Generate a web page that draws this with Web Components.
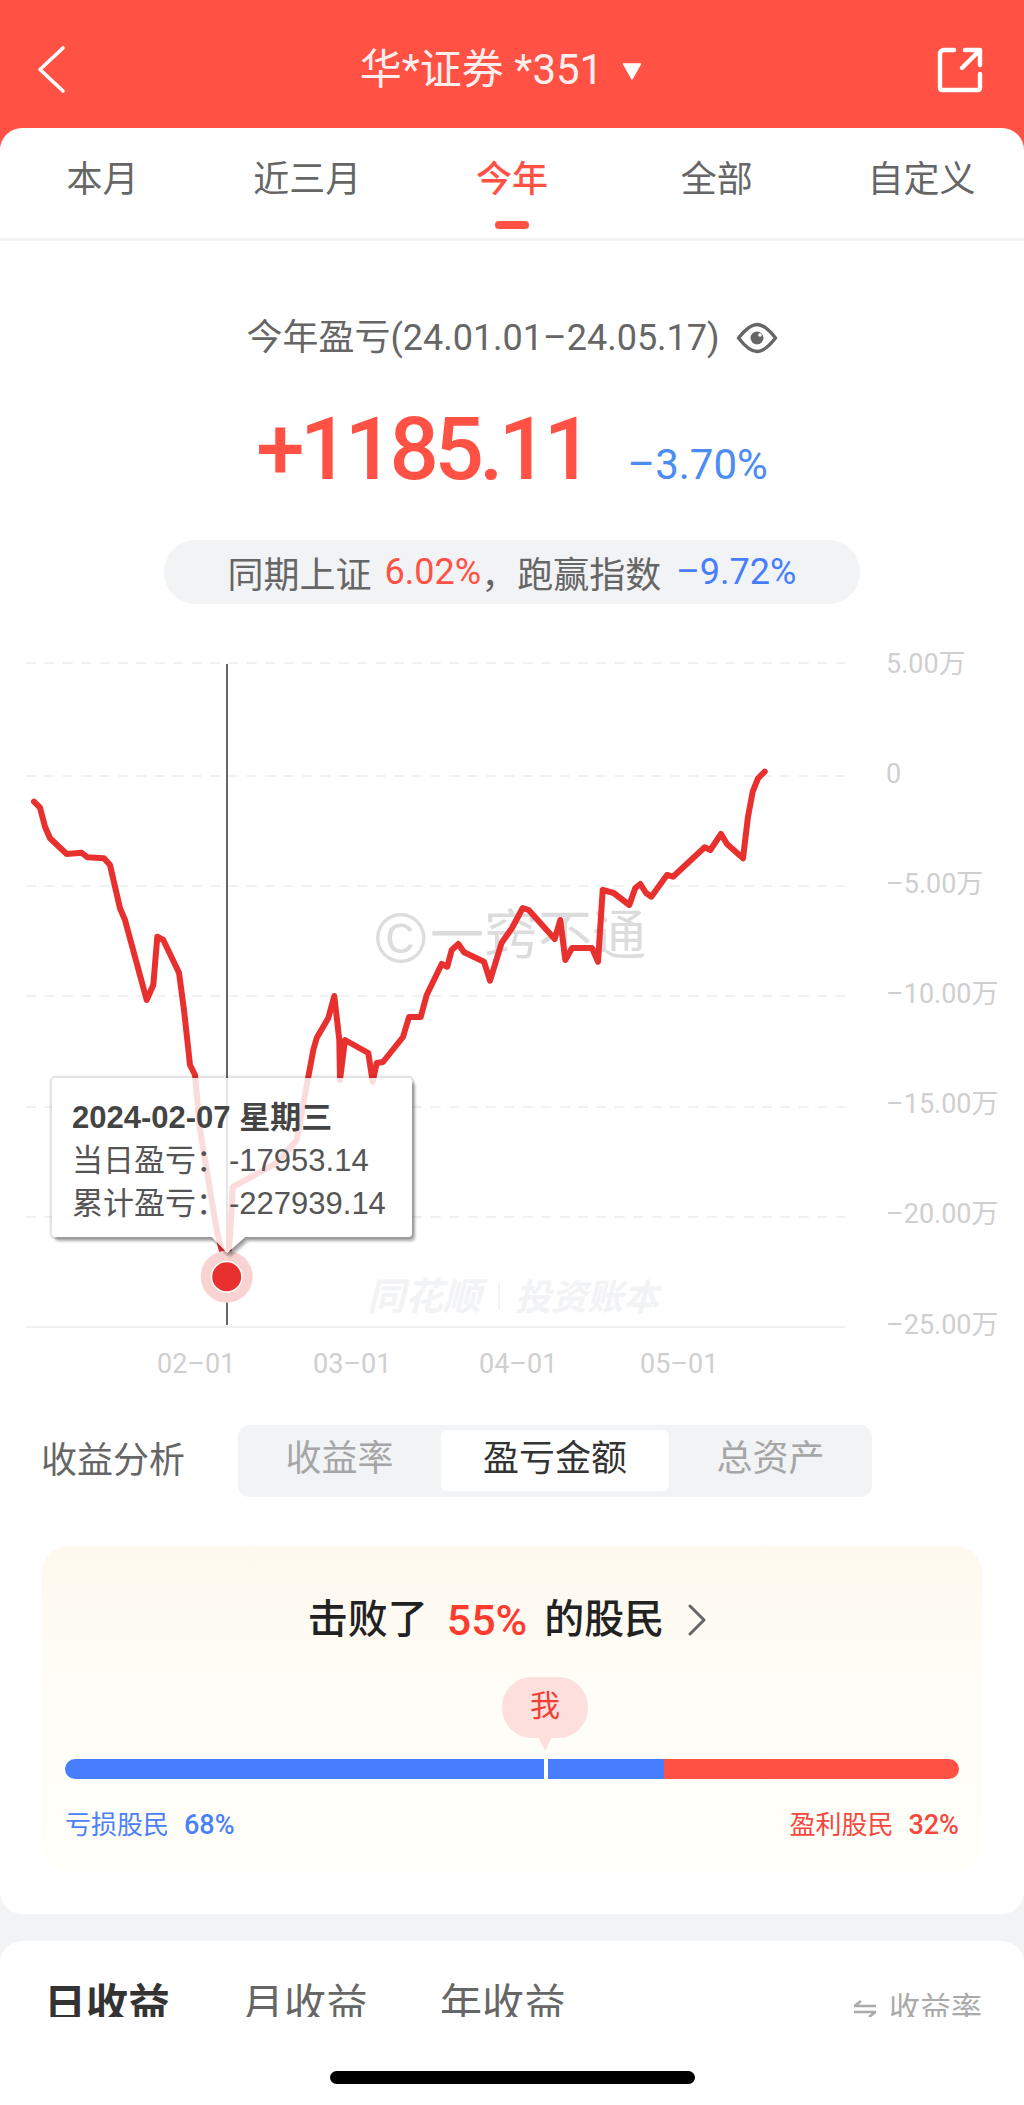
<!DOCTYPE html>
<html lang="zh-CN">
<head>
<meta charset="utf-8">
<title>今年盈亏</title>
<style>
html,body{margin:0;padding:0;background:#f2f3f5}
body{width:1024px;height:2105px;overflow:hidden;font-family:Roboto,"Noto Sans CJK SC",sans-serif;color:#666}
</style>
</head>
<body>
<phone-page>
  <nav-bar title-text="华*证券 *351"></nav-bar>
  <main-sheet>
    <range-tabs></range-tabs>
    <profit-summary></profit-summary>
    <profit-chart></profit-chart>
    <metric-switch></metric-switch>
    <beat-card></beat-card>
  </main-sheet>
  <earnings-sheet></earnings-sheet>
</phone-page>
<script>
function def(name, html, setup){
  customElements.define(name, class extends HTMLElement{
    constructor(){super();const t=document.createElement('template');t.innerHTML=html;this.attachShadow({mode:'open'}).appendChild(t.content.cloneNode(true));}
    connectedCallback(){if(setup)setup(this);}
  });
}

def('phone-page',`<style>
:host{display:block;width:1024px;height:2105px;overflow:hidden;background:#f2f3f5}
</style><slot></slot>`);

def('nav-bar',`<style>
:host{display:flex;align-items:flex-start;justify-content:space-between;box-sizing:border-box;height:160px;margin-bottom:-32px;padding:40px 34px 0 34px;background:#ff5245;color:#fff}
svg{display:block;flex:none}
.title{display:flex;align-items:center;height:60px;margin-top:0;font:400 42px/60px Roboto,"Noto Sans CJK SC",sans-serif;color:rgba(255,255,255,.92);white-space:pre}
.title svg{margin-left:19px;margin-top:2px}
</style>
<svg width="34" height="60" viewBox="34 40 34 60" fill="none" stroke="#fff" stroke-width="3.6" stroke-linecap="round" stroke-linejoin="round"><path d="M63 48 40 69.5 63 91"/></svg>
<div class="title"><span id="t"></span><svg width="20" height="17" viewBox="0 0 20 17"><path d="M1.5 1h17L10 16z" fill="#fff" stroke="#fff" stroke-width="1.5" stroke-linejoin="round"/></svg></div>
<svg width="56" height="60" viewBox="934 40 56 60" fill="none" stroke="#fff" stroke-width="4.4" stroke-linecap="round" stroke-linejoin="round"><path d="M954 50h-10a4 4 0 0 0-4 4v34a2 2 0 0 0 2 2h36a2 2 0 0 0 2-2V74"/><path d="M962 68 979 51M965 50h15v15"/></svg>`,
el=>{el.shadowRoot.getElementById('t').textContent=el.getAttribute('title-text');});

def('main-sheet',`<style>
:host{display:block;box-sizing:border-box;height:1786px;background:#fff;border-radius:22px}
</style><slot></slot>`);

def('range-tabs',`<style>
:host{display:grid;grid-template-columns:repeat(5,1fr);box-sizing:border-box;height:113px;border-bottom:3px solid #f2f3f5;padding:0 0;font:400 36px/104px Roboto,"Noto Sans CJK SC",sans-serif;color:#666;text-align:center}
div{position:relative}
.on{color:#ff5245;font-weight:500}
.on::after{content:"";position:absolute;left:50%;top:93px;width:34px;height:8px;margin-left:-17px;border-radius:4px;background:#ff5245}
</style>
<div>本月</div><div>近三月</div><div class="on">今年</div><div>全部</div><div>自定义</div>`);

def('profit-summary',`<style>
:host{display:flex;flex-direction:column;align-items:center;padding-top:73px;font-family:Roboto,"Noto Sans CJK SC",sans-serif}
.head{display:flex;align-items:center;height:48px;font-size:36px;line-height:48px;color:#666;white-space:nowrap}
.head svg{margin-left:16px}
.nums{display:flex;align-items:baseline;height:100px;margin-top:37px;line-height:100px;white-space:nowrap}
.big{font-size:87px;font-weight:500;color:#ff5245;letter-spacing:-4.6px}
.pct{margin-left:39px;font-size:42px;color:#4b8cf5}
.pill{display:flex;align-items:center;justify-content:center;box-sizing:border-box;width:696px;height:64px;margin-top:41px;border-radius:32px;background:#f2f3f5;font-size:36px;color:#666;white-space:pre}
.r{color:#ff5245;margin-left:13px}.b{color:#477eff;margin-left:15px}
</style>
<div class="head"><span>今年盈亏(24.01.01–24.05.17)</span>
<svg width="42" height="34" viewBox="735 321 42 34" fill="none"><path d="M737.5 338Q748 324.500 756 324.500T774.500 338Q764 351.500 756 351.500T737.500 338Z" stroke="#666" stroke-width="3.4" stroke-linejoin="round"/><circle cx="756" cy="338" r="6.500" fill="#666"/><circle cx="759" cy="335" r="1.800" fill="#fff"/></svg></div>
<div class="nums"><span class="big">+1185.11</span><span class="pct">–3.70%</span></div>
<div class="pill"><span>同期上证</span><span class="r">6.02%</span><span>，</span><span>跑赢指数</span><span class="b">–9.72%</span></div>`);

const linePts="34,801.7 40,807.7 45,826.7 50,838.3 66.7,854 81.7,852.7 87.3,857.3 104,858.3 110,865 120,908.3 125,920 146.700,1000 153.300,985 157.300,936.700 163.300,940 179,972.700 184,1010 187.300,1040 190,1065 195,1075 200,1130 216.700,1230 226.700,1270 230,1237 232.700,1187 276.700,1163 296.700,1140 308.300,1077 313.300,1050 316.700,1038 328.300,1018 334.300,996 339.300,1040 340,1080 345,1040 368.300,1053 372.700,1081.700 376.700,1063 383,1062 403,1037 409,1017 420.700,1017 426.700,995 441.700,964 447.300,966.700 451.700,950 458.300,944 464,952.300 484,961.700 490,980.700 501.700,942.700 512,928 522.700,908 528.700,910 554.700,939 560.300,920 565.300,960 572,948 592,948 598,961.700 602.700,890 613.700,893 629.300,905 635.300,888 640.300,884 646,893 651.300,896.700 667,875 673,876.700 704.700,847.300 710.300,850 721,834 727,844 743,858.300 748,816.700 752.700,791.700 758,778.300 764.700,771.700";
const gridYs=[663,776,886,996,1107,1217];
const yLabels=[["5.00万",673],["0",783],["–5.00万",893],["–10.00万",1003],["–15.00万",1113],["–20.00万",1223],["–25.00万",1334]];
const xLabels=[["02–01",157],["03–01",313],["04–01",479],["05–01",640]];

def('profit-chart',`<style>
:host{display:block;position:relative;height:821px;overflow:visible}
svg{display:block;width:1024px;height:821px}
text{font-family:Roboto,"Noto Sans CJK SC",sans-serif}
.ax{font-size:27px;fill:#cfcfcf}
.wm{font-size:54px;fill:#dcdcdc}
.wb{font-weight:700;font-style:italic;fill:#f2f3f5}
chart-tooltip{left:52px;top:474px}
</style>
<svg viewBox="0 604 1024 821" xmlns="http://www.w3.org/2000/svg">
  <g id="grid"></g>
  <line x1="26" x2="845" y1="1327" y2="1327" stroke="#f0f1f2" stroke-width="2"/>
  <text x="375" y="962" style="font-family:'Liberation Sans',sans-serif;font-size:70px;fill:#dcdcdc">©</text>
  <text class="wm" x="430" y="955">一窍不通</text>
  <text class="wb" x="367" y="1310" font-size="38" style="font-size:38px">同花顺</text>
  <line x1="499" x2="499" y1="1283" y2="1310" stroke="#f2f3f5" stroke-width="2"/>
  <text class="wb" x="515" y="1310" style="font-size:36px">投资账本</text>
  <g id="labels"></g>
  <line x1="227" x2="227" y1="664" y2="1325" stroke="#666" stroke-width="2"/>
  <polyline points="${linePts}" fill="none" stroke="#e8302f" stroke-width="6" stroke-linejoin="round" stroke-linecap="round"/>
  <circle cx="226.700" cy="1276.700" r="26" fill="#f9d2d2"/>
  <circle cx="226.700" cy="1276.700" r="16" fill="#fff"/>
  <circle cx="226.700" cy="1276.700" r="14.500" fill="#e8302f"/>
</svg>
<chart-tooltip></chart-tooltip>`,
el=>{
  const NS='http://www.w3.org/2000/svg',r=el.shadowRoot,g=r.getElementById('grid'),l=r.getElementById('labels');
  gridYs.forEach(y=>{const e=document.createElementNS(NS,'line');e.setAttribute('x1',26);e.setAttribute('x2',845);e.setAttribute('y1',y);e.setAttribute('y2',y);e.setAttribute('stroke','#f0f1f2');e.setAttribute('stroke-width',2);e.setAttribute('stroke-dasharray','10 8.4');g.appendChild(e);});
  const tx=(s,x,y)=>{const e=document.createElementNS(NS,'text');e.setAttribute('class','ax');e.setAttribute('x',x);e.setAttribute('y',y);e.textContent=s;l.appendChild(e);};
  yLabels.forEach(([s,y])=>tx(s,886,y));
  xLabels.forEach(([s,x])=>tx(s,x,1373));
});

const tipShape="M4 0H356a4 4 0 0 1 4 4V155a4 4 0 0 1-4 4H193L175 175 160 159H4a4 4 0 0 1-4-4V4a4 4 0 0 1 4-4Z";
def('chart-tooltip',`<style>
:host{display:block;position:absolute;box-sizing:border-box;width:360px;height:159px;padding:20px 0 0 20px;font:400 31px/40px "Liberation Sans","Noto Sans CJK SC",sans-serif;color:#555;white-space:nowrap}
svg{position:absolute;left:0;top:0;overflow:visible}
div{position:relative}
.d{font-weight:700;color:#444}
.c{font-family:"Noto Sans CJK TC",sans-serif}
.v{margin-left:2px}
</style>
<svg width="360" height="176" viewBox="0 0 360 176">
  <defs>
    <filter id="bl" x="-10%" y="-10%" width="120%" height="120%"><feGaussianBlur stdDeviation="1.500"/></filter>
    <mask id="out" maskUnits="userSpaceOnUse" x="-20" y="-20" width="400" height="220"><rect x="-20" y="-20" width="400" height="220" fill="#fff"/><path d="${tipShape}" fill="#000"/></mask>
  </defs>
  <g mask="url(#out)">
    <path d="${tipShape}" fill="none" stroke="#000" stroke-opacity=".1" stroke-width="5"/>
    <path d="${tipShape}" transform="translate(3 4)" fill="#000" fill-opacity=".32" filter="url(#bl)"/>
  </g>
  <path d="${tipShape}" fill="#fff" fill-opacity=".83"/>
</svg>
<div class="d">2024-02-07 星期三</div>
<div>当日盈亏<span class="c">：</span><span class="v">-17953.14</span></div>
<div>累计盈亏<span class="c">：</span><span class="v">-227939.14</span></div>`);

def('metric-switch',`<style>
:host{display:flex;align-items:center;height:72px;padding-left:41px;font:400 36px/48px Roboto,"Noto Sans CJK SC",sans-serif;color:#666}
.l{flex:0 0 197px}
.seg{display:grid;grid-template-columns:203px 228px 203px;box-sizing:border-box;width:634px;height:72px;padding:5px 0 6px;border-radius:12px;background:#f2f3f5;color:#a6a6a6;text-align:center;line-height:58px}
.on{background:#fff;border-radius:6px;color:#333}
</style>
<div class="l">收益分析</div>
<div class="seg"><div>收益率</div><div class="on">盈亏金额</div><div>总资产</div></div>`);

def('beat-card',`<style>
:host{display:block;box-sizing:border-box;height:327px;margin:49px 42px 0;padding:44px 23px 0;border-radius:26px;background:linear-gradient(180deg,#fef9ef 0%,#fffdf7 45%,#fffef9 100%);font-family:Roboto,"Noto Sans CJK SC",sans-serif}
.t{display:flex;align-items:center;justify-content:center;height:60px;padding-right:10px;font-size:40px;line-height:60px;font-weight:500;color:#222;white-space:nowrap}
.t b{font-weight:500;font-size:43px;color:#ff3b30;margin:0 17px 0 19px}
.t svg{margin-left:24px}
.bub{position:relative;box-sizing:border-box;width:86px;height:61px;margin:27px 0 21px calc(53.7% - 43px);border-radius:30px;background:#fde0dd;color:#f03f36;font-size:30px;line-height:58px;text-align:center}
.bub::after{content:"";position:absolute;left:36px;top:60px;width:14px;height:14px;background:#fde0dd;clip-path:polygon(0 0,100% 0,50% 100%)}
.bar{display:grid;grid-template-columns:478.500px 4px 116.500px 1fr;height:20px;border-radius:10px;overflow:hidden}
.bl{background:#477eff}.w{background:#fff}.rd{background:#ff5245}
.lb{display:flex;justify-content:space-between;height:36px;margin-top:28px;font-size:26px;line-height:36px}
.lb i{font-style:normal;font-weight:500;font-size:27px;margin-left:15px}
.a{color:#4a80f8}.z{color:#f5483e}
</style>
<div class="t"><span>击败了</span><b>55%</b><span>的股民</span>
<svg width="18" height="32" viewBox="0 0 18 32" fill="none" stroke="#666" stroke-width="3" stroke-linecap="round" stroke-linejoin="round"><path d="M2 2 16 16 2 30"/></svg></div>
<div class="bub">我</div>
<div class="bar"><div class="bl"></div><div class="w"></div><div class="bl"></div><div class="rd"></div></div>
<div class="lb"><span class="a">亏损股民<i>68%</i></span><span class="z">盈利股民<i>32%</i></span></div>`);

def('earnings-sheet',`<style>
:host{display:block;box-sizing:border-box;height:164px;margin-top:27px;background:#fff;border-radius:22px 22px 0 0;font-family:Roboto,"Noto Sans CJK SC",sans-serif}
.row{display:flex;align-items:flex-start;box-sizing:border-box;height:76px;padding:34px 42px 0 44px;overflow:hidden;color:#666;font-size:42px;line-height:60px;white-space:nowrap}
.row span{margin-right:72px}
.on{font-weight:700;color:#333}
.sw{display:flex;align-items:center;height:60px;margin-left:auto;padding-top:4px;font-size:31px;color:#aaa;gap:12px}
.home{width:365px;height:13px;margin:54px auto 0;border-radius:7px;background:#000}
</style>
<div class="row"><span class="on">日收益</span><span>月收益</span><span>年收益</span>
<div class="sw"><svg width="24" height="18" viewBox="0 0 24 18" fill="none" stroke="#aaa" stroke-width="2.600"><path d="M1 6H23M1.500 6 8 1"/><path d="M1 12H23M22.500 12 16 17"/></svg>收益率</div></div>
<div class="home"></div>`);
</script>
</body>
</html>
